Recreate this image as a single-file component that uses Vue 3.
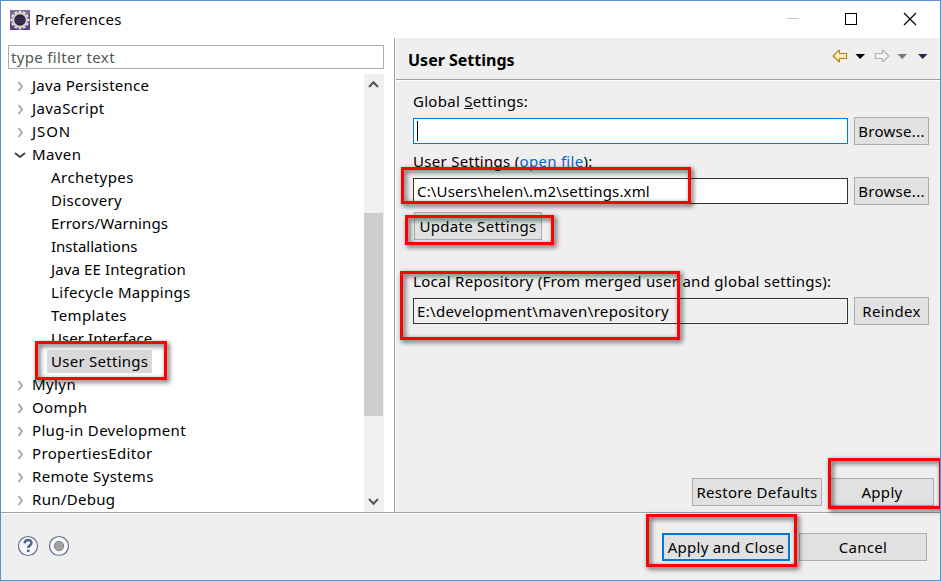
<script setup>
const tree = [
  { label: 'Java Persistence', level: 0, spacing: 0.25 },
  { label: 'JavaScript', level: 0, spacing: 0.4 },
  { label: 'JSON', level: 0, spacing: 0.9 },
  { label: 'Maven', level: 0, open: true, spacing: 0.4 },
  { label: 'Archetypes', level: 1, spacing: 0.45 },
  { label: 'Discovery', level: 1, spacing: 0.35 },
  { label: 'Errors/Warnings', level: 1, spacing: 0.1 },
  { label: 'Installations', level: 1, spacing: 0 },
  { label: 'Java EE Integration', level: 1, spacing: 0.13 },
  { label: 'Lifecycle Mappings', level: 1, spacing: 0.33 },
  { label: 'Templates', level: 1, spacing: 0.4 },
  { label: 'User Interface', level: 1, spacing: 0.07 },
  { label: 'User Settings', level: 1, selected: true, spacing: 0.27 },
  { label: 'Mylyn', level: 0, spacing: 0.4 },
  { label: 'Oomph', level: 0, spacing: 0.4 },
  { label: 'Plug-in Development', level: 0, spacing: 0.32 },
  { label: 'PropertiesEditor', level: 0, spacing: 0.35 },
  { label: 'Remote Systems', level: 0, spacing: 0.35 },
  { label: 'Run/Debug', level: 0, spacing: 0.3 },
]
const teeth = Array.from({ length: 12 }, (_, i) => i * 30)
</script>

<template>
  <div class="window">
    <header class="titlebar">
      <svg class="logo" width="20" height="20" viewBox="0 0 20 20">
        <rect width="20" height="20" fill="#5b3f8a" />
        <path d="M0 0H20V4L0 13Z" fill="#7b6c98" />
        <g fill="#e4dfd8">
          <rect v-for="a in teeth" :key="a" x="8.6" y="0.6" width="2.8" height="4" :transform="`rotate(${a} 10 10)`" />
        </g>
        <circle cx="10" cy="10" r="6.8" fill="#2c2545" stroke="#d5cfca" stroke-width="2" />
        <path d="M5 8.5H15M4.700 10.500H15.300M5.300 12.500H14.700" stroke="#453f66" stroke-width=".6" />
      </svg>
      <span class="title">Preferences</span>
      <svg class="controls" width="132" height="16" viewBox="0 0 132 16">
        <path d="M0 6.500H12" stroke="#c8c8c8" />
        <rect x="58.500" y="1.500" width="11" height="11" fill="none" stroke="#000" />
        <path d="M117 1L129 13M129 1L117 13" fill="none" stroke="#000" stroke-width="1.200" />
      </svg>
    </header>

    <div class="body">
      <aside class="side">
        <div class="filter">type filter text</div>
        <div class="tree-area">
          <ul class="tree">
            <li v-for="n in tree" :key="n.label" :class="['node', { child: n.level }]">
              <svg v-if="!n.level" class="twisty" width="12" height="12" viewBox="0 0 12 12">
                <path v-if="n.open" d="M1 4L6 8L11 4" fill="none" stroke="#404040" stroke-width="1.800" />
                <path v-else d="M4.500 2L8 6.500L4.500 11" fill="none" stroke="#a6a6a6" stroke-width="1.900" />
              </svg>
              <span :class="['label', { selected: n.selected }]" :style="{ letterSpacing: n.spacing + 'px' }">{{ n.label }}</span>
            </li>
          </ul>
          <div class="scrollbar">
            <svg width="20" height="22" viewBox="0 0 20 22"><path d="M5 13L9.500 8.300L14 13" fill="none" stroke="#555" stroke-width="2" /></svg>
            <div class="thumb"></div>
            <svg width="20" height="22" viewBox="0 0 20 22"><path d="M5 9L9.500 13.700L14 9" fill="none" stroke="#555" stroke-width="2" /></svg>
          </div>
        </div>
      </aside>

      <main class="page">
        <div class="page-head">
          <h1>User Settings</h1>
          <svg class="nav" width="98" height="16" viewBox="0 0 98 16">
            <defs>
              <linearGradient id="gold" x1="0" y1="0" x2="0" y2="1">
                <stop offset="0" stop-color="#fffbe8" /><stop offset="1" stop-color="#ffe49a" />
              </linearGradient>
            </defs>
            <path d="M1.200 8L6.500 2.600H7.500V5.500H14.500V10.500H7.500V13.400H6.500Z" fill="url(#gold)" stroke="#b87a12" stroke-width="1.200" stroke-linejoin="round" />
            <path d="M23.500 6H33L28.200 11Z" fill="#000" />
            <path d="M56.800 8L51.500 2.600H50.500V5.500H43.500V10.500H50.500V13.400H51.500Z" fill="#f5f5f5" stroke="#b2b2b2" stroke-width="1.200" stroke-linejoin="round" />
            <path d="M65.500 6H75L70.200 11Z" fill="#777" />
            <path d="M86 6H95.500L90.700 11Z" fill="#35204e" />
          </svg>
        </div>

        <div class="form">
          <div class="caption">Global <u>S</u>ettings:</div>
          <div class="line">
            <div class="field focused"><i class="caret"></i></div>
            <button class="btn">Browse...</button>
          </div>
          <div class="caption second">User Settings (<a>open file</a>):</div>
          <div class="line">
            <div class="field path-user">C:\Users\helen\.m2\settings.xml</div>
            <button class="btn">Browse...</button>
          </div>
          <button class="btn update">Update Settings</button>
          <div class="caption third">Local Repository (From merged user and global settings):</div>
          <div class="line">
            <div class="field readonly">E:\development\maven\repository</div>
            <button class="btn">Reindex</button>
          </div>
        </div>

        <div class="page-actions">
          <button class="btn restore">Restore Defaults</button>
          <button class="btn apply">Apply</button>
        </div>
      </main>
    </div>

    <footer class="footer">
      <svg class="help" width="54" height="22" viewBox="0 0 54 22">
        <circle cx="11" cy="11" r="9.500" fill="#f8f9fb" stroke="#62738d" stroke-width="1.200" />
        <path d="M7.700 8.400C7.800 3.800 14.600 4.200 14.500 8C14.400 10.500 11.200 10.300 11.200 13" fill="none" stroke="#50678d" stroke-width="2.500" />
        <rect x="10" y="14.600" width="2.500" height="2.500" fill="#50678d" />
        <circle cx="42" cy="11" r="9.500" fill="#f8f9fb" stroke="#62738d" stroke-width="1.200" />
        <circle cx="42" cy="11" r="4.700" fill="#a2a2a2" stroke="#808080" />
      </svg>
      <button class="btn primary">Apply and Close</button>
      <button class="btn cancel">Cancel</button>
    </footer>

    <i class="mark mark-tree"></i>
    <i class="mark mark-path"></i>
    <i class="mark mark-update"></i>
    <i class="mark mark-local"></i>
    <i class="mark mark-apply"></i>
    <i class="mark mark-close"></i>
  </div>
</template>

<style>
body { margin: 0; overflow: hidden; }
</style>

<style scoped>
* { box-sizing: border-box; }
.window {
  position: relative; width: 941px; height: 581px; overflow: hidden;
  display: flex; flex-direction: column;
  border: 1px solid #5a91c6; background: #efefef; color: #000;
  font: 15px/23px "Noto Sans", "Open Sans", sans-serif;
  letter-spacing: .29px;
}
.titlebar { height: 37px; flex: none; display: flex; align-items: center; background: #fff; padding: 0 21px 0 9px; }
.logo { flex: none; }
.title { margin-left: 5px; }
.controls { margin-left: auto; }
.body { height: 474px; flex: none; display: flex; }
.side { width: 394px; flex: none; display: flex; flex-direction: column; background: #fff; padding: 7px 10px 0 7px; border-right: 1px solid #a0a0a0; }
.filter { height: 24px; flex: none; border: 1px solid #abadb3; padding-left: 2px; line-height: 22px; color: #555; letter-spacing: .34px; }
.tree-area { margin-top: 5px; flex: 1; min-height: 0; display: flex; }
.tree { flex: 1; margin: 0; padding: 0; list-style: none; overflow: hidden; }
.node { height: 23px; display: flex; align-items: center; padding-left: 6px; }
.node.child { padding-left: 39px; }
.twisty { flex: none; margin-right: 2px; }
.label { padding: 0 4px; white-space: nowrap; }
.selected { background: #d9d9d9; }
.scrollbar { width: 20px; flex: none; display: flex; flex-direction: column; justify-content: space-between; background: #f0f0f0; }
.thumb { width: 19px; height: 203px; margin-top: 117px; margin-bottom: 74px; background: #cdcdcd; }
.page { flex: 1; display: flex; flex-direction: column; border-left: 1px solid #fff; }
.page-head { height: 43px; flex: none; display: flex; justify-content: space-between; align-items: center; padding: 0 10px 0 12px; border-bottom: 1px solid #fff; box-shadow: inset 0 -1px #a0a0a0; }
h1 { margin: 2px 0 0; font-size: 16px; font-weight: 700; line-height: 23px; letter-spacing: 0; }
.nav { margin-top: -7px; }
.form { padding: 9px 11px 0 17px; }
.caption { height: 23px; margin-bottom: 4px; white-space: nowrap; }
.caption a { color: #0066cc; }
.line { display: flex; align-items: center; gap: 6px; height: 28px; }
.field { width: 435px; height: 26px; border: 1px solid #333; background: #fff; padding-left: 3px; line-height: 24px; white-space: nowrap; display: flex; align-items: center; }
.focused { border-color: #0078d7; }
.caret { width: 1px; height: 20px; background: #000; }
.path-user { letter-spacing: .17px; }
.readonly { background: #efefef; box-shadow: inset 0 0 0 1px #f8f8f8; letter-spacing: .33px; }
.btn { width: 75px; height: 28px; margin: 0; padding: 0; border: 1px solid #adadad; border-radius: 0; background: #e1e1e1; color: #000; font: inherit; letter-spacing: inherit; line-height: 26px; white-space: nowrap; flex: none; }
.second { margin-top: 5px; }
.update { display: block; width: 128px; margin: 7px 0 0 1px; }
.third { margin-top: 30px; }
.page-actions { margin-top: auto; display: flex; gap: 8px; justify-content: flex-end; padding: 0 6px 6px 0; }
.restore { width: 130px; }
.apply { width: 104px; }
.footer { flex: 1; display: flex; align-items: flex-start; border-top: 1px solid #a0a0a0; box-shadow: inset 0 1px #fff; padding: 20px 13px 0 16px; }
.help { margin-top: 2px; margin-right: auto; }
.primary { width: 128px; border: 2px solid #0078d7; line-height: 24px; }
.cancel { width: 128px; margin-left: 9px; }
.mark { position: absolute; border: 3px solid #f00; filter: drop-shadow(2px 2px 2.5px rgba(0, 0, 0, .75)); }
.mark-tree { left: 34px; top: 340px; width: 132px; height: 39px; }
.mark-path { left: 400px; top: 166px; width: 290px; height: 37px; }
.mark-update { left: 404px; top: 214px; width: 149px; height: 30px; }
.mark-local { left: 399px; top: 270px; width: 280px; height: 69px; }
.mark-apply { left: 827px; top: 457px; width: 114px; height: 51px; }
.mark-close { left: 645px; top: 513px; width: 151px; height: 53px; }
</style>
